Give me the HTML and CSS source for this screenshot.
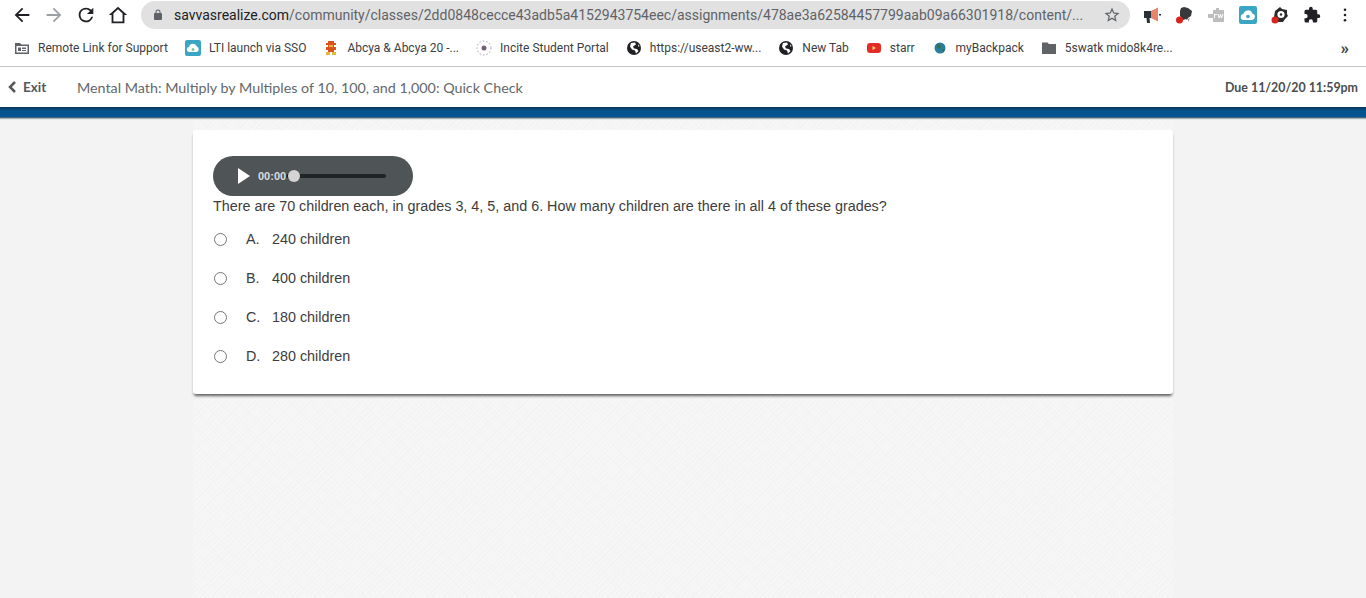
FILE: index.html
```html
<!DOCTYPE html>
<html lang="en">

<head>
  <meta charset="UTF-8" />
  <link rel="stylesheet" href="styles.css">
  <title>Mental Math: Quick Check</title>
</head>

<body>
  <div class="toolbar">
    <svg class="nav-icon" viewBox="0 0 24 24"><path fill="#202124" d="M20 11H7.800l5.600-5.600L12 4l-8 8 8 8 1.400-1.400L7.800 13H20z" /></svg>
    <svg class="nav-icon" viewBox="0 0 24 24"><path fill="#9aa0a6" d="M4 11h12.200l-5.600-5.600L12 4l8 8-8 8-1.400-1.400 5.600-5.600H4z" /></svg>
    <svg class="nav-icon" viewBox="0 0 24 24"><path fill="#202124" d="M17.650 6.350A7.960 7.960 0 0 0 12 4a8 8 0 1 0 7.730 10h-2.080A6 6 0 1 1 12 6c1.660 0 3.140.69 4.220 1.780L13 11h7V4z" /></svg>
    <svg class="nav-icon" viewBox="0 0 24 24"><path fill="#202124" fill-rule="evenodd" d="M12 3 2 12h3v9h14v-9h3zM12 5.800l5 4.500V19H7v-8.700z" /></svg>
    <div class="omnibox">
      <svg class="lock" viewBox="0 0 24 24"><path fill="#5f6368" d="M18 8h-1V6a5 5 0 0 0-10 0v2H6a2 2 0 0 0-2 2v10c0 1.100.9 2 2 2h12a2 2 0 0 0 2-2V10a2 2 0 0 0-2-2zM9 6a3 3 0 0 1 6 0v2H9z" /></svg>
      <div class="url"><span class="url-host">savvasrealize.com</span>/community/classes/2dd0848cecce43adb5a4152943754eec/assignments/478ae3a62584457799aab09a66301918/content/...</div>
      <svg class="star" viewBox="0 0 24 24"><path fill="#5f6368" d="M22 9.240l-7.190-.62L12 2 9.190 8.630 2 9.240l5.460 4.730L5.820 21 12 17.270 18.180 21l-1.630-7.030zM12 15.400l-3.760 2.270 1-4.280-3.320-2.880 4.380-.38L12 6.100l1.710 4.040 4.380.38-3.320 2.880 1 4.280z" /></svg>
    </div>
    <div class="extensions">
      <svg class="ext" viewBox="0 0 18 18"><path fill="#e8846a" d="M8 5l7-3.500v14L8 12z" /><path fill="#263238" d="M1 5h7v7H6.500l.5 5H4l-.5-5H1zM16 8h2v1.500h-2z" /></svg>
      <svg class="ext" viewBox="0 0 18 18"><path fill="#37393b" d="M6 2l3-1 4 1 4 3-1 5-3 2-1 2-1-1-3 1-3-4V5z" /><path fill="#888" d="M13 13l2-1-2 4z" /><circle cx="4.500" cy="14" r="3.500" fill="#d9241c" /></svg>
      <svg class="ext" viewBox="0 0 18 18"><path fill="#bdbdbd" d="M6 4h3V2h3v2h5v12H6v-4H1V8h5z" /><path fill="#fff" d="M7 8h3v1H8v3H7zM10.500 8h1l.8 2.500.8-2.500h.8l.8 2.500.8-2.500h1L15 12h-1l-.7-2-.7 2h-1z" /></svg>
      <svg class="ext" viewBox="0 0 18 18"><rect width="18" height="18" rx="2" fill="#3aa6c4" /><path fill="#fff" d="M5 14a3 3 0 0 1-.500-6 4.500 4.500 0 0 1 8.700-.500A3.300 3.300 0 0 1 13 14z" /><circle cx="9" cy="10.500" r="1.800" fill="#3aa6c4" /></svg>
      <svg class="ext" viewBox="0 0 18 18"><path fill="#2b2b2b" d="M9 1l2 2 5 1v4l1 2-3 3-2 3H6l-3-5 1-6z" /><circle cx="10" cy="8.500" r="3.600" fill="#fff" /><circle cx="10" cy="8.500" r="1.200" fill="#2b2b2b" /><circle cx="4" cy="14" r="3.500" fill="#d9241c" /></svg>
      <svg class="ext" viewBox="0 0 24 24"><path fill="#202124" d="M20.500 11H19V7a2 2 0 0 0-2-2h-4V3.500a2.500 2.500 0 0 0-5 0V5H4a2 2 0 0 0-2 2v3.800h1.500a2.700 2.700 0 0 1 0 5.400H2V20a2 2 0 0 0 2 2h3.800v-1.500a2.700 2.700 0 0 1 5.400 0V22H17a2 2 0 0 0 2-2v-4h1.500a2.500 2.500 0 0 0 0-5z" /></svg>
    </div>
    <svg class="menu-dots" viewBox="0 0 4 16"><circle cx="2" cy="2" r="1.500" /><circle cx="2" cy="8" r="1.500" /><circle cx="2" cy="14" r="1.500" /></svg>
  </div>

  <div class="bookmarks">
    <div class="bookmark">
      <svg class="bm-icon" viewBox="0 0 16 16"><path fill="#5f6368" fill-rule="evenodd" d="M1 3h5l1.500 1.500H15V14H1zM2.500 6v6.500h11V6z" /><path fill="#5f6368" d="M4 7.500h3V11H4zM8 7.500h4V9H8zM8 10h4v1H8z" /></svg>
      <span>Remote Link for Support</span>
    </div>
    <div class="bookmark">
      <svg class="bm-icon" viewBox="0 0 16 16"><rect width="16" height="16" rx="2" fill="#3aa6c4" /><path fill="#fff" d="M4.500 12a2.500 2.500 0 0 1-.400-5 4 4 0 0 1 7.700-.400A2.800 2.800 0 0 1 11.500 12z" /><circle cx="8" cy="9.500" r="1.500" fill="#7cc5a8" /></svg>
      <span>LTI launch via SSO</span>
    </div>
    <div class="bookmark">
      <svg class="bm-icon" viewBox="0 0 16 16"><path fill="#d9541c" d="M5 1h6v2h2v2H11v2h2v3h-2v2H5v-2H3V7h2V5H3V3h2z" /><path fill="#e9b53a" d="M6 5h4v2H6zM3 12h4v3H3zM9 12h4v3H9z" /></svg>
      <span>Abcya &amp; Abcya 20 -...</span>
    </div>
    <div class="bookmark">
      <svg class="bm-icon" viewBox="0 0 16 16"><circle cx="8" cy="8" r="2.500" fill="#75607a" /><circle cx="8" cy="8" r="7" fill="none" stroke="#a99bb0" stroke-width="1" stroke-dasharray="1.500 2" /></svg>
      <span>Incite Student Portal</span>
    </div>
    <div class="bookmark">
      <svg class="bm-icon" viewBox="0 0 16 16"><circle cx="8" cy="8" r="7" fill="#202124" /><path fill="#fff" d="M5 3l4-.500 1 2-3 2 1 2 3 .500 1.500 2-2.500 2.500-1-3-3-1-2-3zM12 4l1.500 2-1 1z" /></svg>
      <span>https://useast2-ww...</span>
    </div>
    <div class="bookmark">
      <svg class="bm-icon" viewBox="0 0 16 16"><circle cx="8" cy="8" r="7" fill="#202124" /><path fill="#fff" d="M5 3l4-.500 1 2-3 2 1 2 3 .500 1.500 2-2.500 2.500-1-3-3-1-2-3zM12 4l1.500 2-1 1z" /></svg>
      <span>New Tab</span>
    </div>
    <div class="bookmark">
      <svg class="bm-icon" viewBox="0 0 16 16"><rect x="1" y="3" width="14" height="10" rx="3" fill="#e52d27" /><path fill="#f5d76e" d="M6.500 6v4l3.500-2z" /></svg>
      <span>starr</span>
    </div>
    <div class="bookmark">
      <svg class="bm-icon" viewBox="0 0 16 16"><circle cx="8" cy="8" r="5.500" fill="#2b7f9e" /><path fill="#3c6e47" d="M5 4l4 1-1 4-3-1zM10 9l3 1-2 3z" /></svg>
      <span>myBackpack</span>
    </div>
    <div class="bookmark">
      <svg class="bm-icon" viewBox="0 0 16 16"><path fill="#5f6368" d="M1 2.500h5.500L8 4h7v10H1z" /></svg>
      <span>5swatk mido8k4re...</span>
    </div>
    <div class="bm-more">»</div>
  </div>

  <header class="app-header">
    <a class="exit"><svg class="chevron" viewBox="0 0 8 12"><path d="M6.500 1 1.500 6l5 5" /></svg>Exit</a>
    <div class="title">Mental Math: Multiply by Multiples of 10, 100, and 1,000: Quick Check</div>
    <div class="due">Due 11/20/20 11:59pm</div>
  </header>
  <div class="blue-bar"></div>

  <main class="page">
    <div class="column">
      <section class="card">
        <div class="player">
          <svg class="play" viewBox="0 0 12 16"><path fill="#fff" d="M0 0l12 8-12 8z" /></svg>
          <span class="time">00:00</span>
          <div class="track"><div class="thumb"></div></div>
        </div>
        <p class="question">There are 70 children each, in grades 3, 4, 5, and 6. How many children are there in all 4 of these grades?</p>
        <div class="answers">
          <div class="answer"><span class="radio"></span><span class="letter">A.</span><span>240 children</span></div>
          <div class="answer"><span class="radio"></span><span class="letter">B.</span><span>400 children</span></div>
          <div class="answer"><span class="radio"></span><span class="letter">C.</span><span>180 children</span></div>
          <div class="answer"><span class="radio"></span><span class="letter">D.</span><span>280 children</span></div>
        </div>
      </section>
    </div>
  </main>
</body>

</html>
```

FILE: styles.css
```css
*,
*::after,
*::before {
  box-sizing: border-box;
}

html,
body {
  height: 100%;
}

body {
  margin: 0;
  display: flex;
  flex-direction: column;
  background-color: #f3f3f3;
  font-family: "Liberation Sans", Arial, sans-serif;
  overflow: hidden;
}

/* browser chrome */
.toolbar {
  display: flex;
  align-items: center;
  height: 30px;
  padding-left: 11px;
  background-color: #fff;
}

.nav-icon {
  width: 22px;
  height: 22px;
  margin-right: 10px;
}

.omnibox {
  display: flex;
  align-items: center;
  width: 989px;
  height: 28px;
  margin-left: 2px;
  padding: 0 9px 0 11px;
  background-color: #e1e1e1;
  border-radius: 14px;
}

.lock {
  flex: none;
  width: 12px;
  height: 12px;
  margin-right: 10px;
}

.url {
  flex: 1;
  overflow: hidden;
  white-space: nowrap;
  font-family: Roboto, sans-serif;
  font-size: 14px;
  color: #5f6368;
}

.url-host {
  color: #202124;
}

.star {
  flex: none;
  width: 18px;
  height: 18px;
  margin-left: 8px;
}

.extensions {
  display: flex;
  align-items: center;
  gap: 14px;
  margin-left: 13px;
}

.ext {
  width: 18px;
  height: 18px;
}

.menu-dots {
  width: 4px;
  height: 14px;
  margin-left: 22px;
  fill: #202124;
}

.bookmarks {
  display: flex;
  align-items: center;
  height: 37px;
  padding-left: 14px;
  background-color: #fff;
  border-bottom: 1px solid #c4c4c4;
  font-family: Roboto, sans-serif;
  font-size: 12px;
  color: #3c4043;
}

.bookmark {
  display: flex;
  align-items: center;
  gap: 8px;
  margin-right: 17px;
  white-space: nowrap;
}

.bm-icon {
  flex: none;
  width: 16px;
  height: 16px;
}

.bm-more {
  margin-left: auto;
  margin-right: 17px;
  font-size: 17px;
  font-weight: bold;
  line-height: 15px;
}

/* app header */
.app-header {
  display: flex;
  align-items: center;
  height: 40px;
  padding: 0 8px;
  background-color: #fff;
  font-family: Lato, sans-serif;
  color: #55585a;
}

.exit {
  display: flex;
  align-items: center;
  width: 69px;
  font-size: 13.500px;
  font-weight: bold;
}

.chevron {
  width: 9px;
  height: 12px;
  margin-right: 6px;
  fill: none;
  stroke: #55585a;
  stroke-width: 2.500;
}

.title {
  flex: 1;
  font-size: 14.300px;
  color: #63686b;
}

.due {
  font-size: 12.400px;
  font-weight: bold;
  color: #4a4d4f;
}

.blue-bar {
  flex: none;
  height: 13px;
  background: linear-gradient(#0b3557 0, #00558f 30%, #00558f 76%, #6d767c 84%, #d9dcdc 92%, #f3f3f3 100%);
}

/* question page */
.page {
  flex: 1;
  display: flex;
  justify-content: center;
}

.column {
  width: 980px;
  padding-top: 10px;
  background-color: #f7f7f7;
  background-image:
    repeating-linear-gradient(45deg, #f3f3f3 0, #f3f3f3 1px, transparent 1px, transparent 3px),
    repeating-linear-gradient(-45deg, #f3f3f3 0, #f3f3f3 1px, transparent 1px, transparent 4px);
}

.card {
  height: 264px;
  padding: 26px 20px 0;
  background-color: #fff;
  border-radius: 3px;
  box-shadow: 0 3px 3px -1px #5f5f5f;
}

.player {
  display: flex;
  align-items: center;
  width: 200px;
  height: 40px;
  padding-left: 25px;
  background-color: #4f5557;
  border-radius: 20px;
}

.play {
  width: 12px;
  height: 16px;
  margin-right: 8px;
}

.time {
  font-size: 11px;
  font-weight: bold;
  color: #dcdcdc;
}

.track {
  position: relative;
  width: 100px;
  height: 4px;
  background-color: #1f2426;
  border-radius: 2px;
}

.thumb {
  position: absolute;
  top: -4px;
  left: 2px;
  width: 12px;
  height: 12px;
  background-color: #d4d4d4;
  border-radius: 50%;
}

.question {
  margin: 0;
  font-size: 14.350px;
  line-height: 20px;
  color: #3d3d3d;
}

.answers {
  display: flex;
  flex-direction: column;
  gap: 19px;
  margin-top: 13px;
}

.answer {
  display: flex;
  align-items: center;
  height: 20px;
  font-size: 14.350px;
  color: #3d3d3d;
}

.radio {
  width: 13px;
  height: 13px;
  margin-left: 1px;
  margin-right: 19px;
  border: 1px solid #767676;
  border-radius: 50%;
  background-color: #fff;
}

.letter {
  width: 26px;
}
```
